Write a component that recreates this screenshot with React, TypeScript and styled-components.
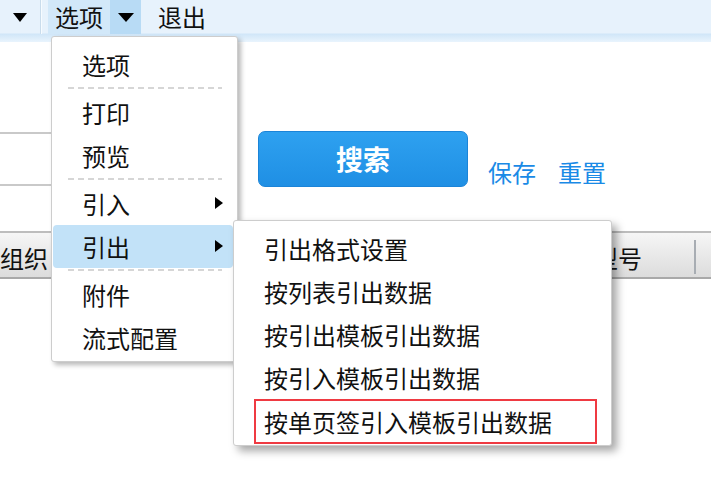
import styled, { createGlobalStyle } from "styled-components";

const GlobalStyle = createGlobalStyle`
  html, body {
    margin: 0;
    padding: 0;
    background: #fff;
    overflow: hidden;
  }
  body {
    font-family: "Noto Sans CJK SC", "Noto Sans", sans-serif;
    color: #111;
  }
`;

const Page = styled.div`
  position: relative;
  width: 711px;
  height: 484px;
  overflow: hidden;
`;

const TopBar = styled.div`
  display: flex;
  height: 42px;
  background: linear-gradient(
    to bottom,
    #e7f2fc 0,
    #e7f2fc 33px,
    #d0e6f8 34px,
    #e9f4fd 42px
  );
`;

const BarSlot = styled.div<{ $w?: number; $bg?: string; $pad?: number }>`
  display: flex;
  align-items: center;
  justify-content: ${(p) => (p.$pad !== undefined ? "flex-start" : "center")};
  height: 34px;
  width: ${(p) => (p.$w ? `${p.$w}px` : "auto")};
  padding-left: ${(p) => p.$pad ?? 0}px;
  box-sizing: border-box;
  background: ${(p) => p.$bg ?? "transparent"};
  font-size: 24px;
  line-height: 34px;
`;

const BarDivider = styled.div`
  width: 2px;
  height: 34px;
  margin: 0 6px 0 0;
  background: linear-gradient(to right, #c9dcec 0, #c9dcec 1px, #f6fbff 1px);
`;

const Caret = styled.span<{ $size?: number }>`
  display: inline-block;
  width: 0;
  height: 0;
  border-left: ${(p) => (p.$size ?? 16) / 2}px solid transparent;
  border-right: ${(p) => (p.$size ?? 16) / 2}px solid transparent;
  border-top: 9px solid #000;
`;

const Content = styled.div`
  padding-top: 89px;
`;

const FormRow = styled.div`
  display: flex;
  align-items: flex-end;
  height: 56px;
`;

const FieldBox = styled.div`
  align-self: flex-start;
  margin-top: 1px;
  width: 226px;
  height: 50px;
  border-top: 2px solid #c9c9c9;
  border-bottom: 2px solid #c9c9c9;
`;

const SearchButton = styled.button`
  margin-left: 32px;
  width: 210px;
  height: 56px;
  border: 1px solid #1b84d8;
  border-radius: 7px;
  background: linear-gradient(to bottom, #2ea1f0, #1f8fe4);
  color: #fff;
  font-family: inherit;
  font-size: 27px;
  font-weight: bold;
  line-height: 54px;
  padding: 0 0 2px;
  align-self: flex-start;
`;

const TextLink = styled.a<{ $gap: number }>`
  margin-left: ${(p) => p.$gap}px;
  margin-bottom: 1px;
  color: #1a8ae6;
  font-size: 24px;
  line-height: 28px;
  text-decoration: none;
`;

const HeaderRow = styled.div`
  display: flex;
  align-items: center;
  margin-top: 44px;
  height: 44px;
  border-top: 2px solid #bdbdbd;
  border-bottom: 2px solid #a9a9a9;
  background: linear-gradient(to bottom, #f6f6f6, #dcdcdc);
  font-size: 24px;
`;

const HeaderCell = styled.div<{ $w: number }>`
  width: ${(p) => p.$w}px;
  flex: none;
  padding-top: 4px;
`;

const HeaderSep = styled.div`
  width: 2px;
  height: 34px;
  margin-top: 4px;
  background: #a8adb3;
`;

const Menu = styled.div<{ $left: number; $top: number; $w: number }>`
  position: absolute;
  left: ${(p) => p.$left}px;
  top: ${(p) => p.$top}px;
  width: ${(p) => p.$w}px;
  box-sizing: border-box;
  background: #fff;
  border: 1px solid #cdcdcd;
  border-radius: 3px;
  box-shadow: 3px 3px 5px rgba(0, 0, 0, 0.28);
  z-index: 5;
`;

const MainMenu = styled(Menu)`
  padding: 6px 4px 2px 1px;
`;

const SubMenu = styled(Menu)`
  padding: 6px 14px 1px 20px;
  box-shadow: 5px 5px 8px rgba(0, 0, 0, 0.35);
  z-index: 6;
`;

const MenuItem = styled.div<{ $active?: boolean }>`
  position: relative;
  display: flex;
  align-items: center;
  height: 43px;
  padding-left: 29px;
  border-radius: 4px;
  background: ${(p) => (p.$active ? "#c2e2f8" : "transparent")};
  font-size: 24px;
  line-height: 43px;
`;

const SubItem = styled.div<{ $marked?: boolean }>`
  display: flex;
  align-items: center;
  height: ${(p) => (p.$marked ? 41 : 43)}px;
  margin-left: ${(p) => (p.$marked ? 0 : 2)}px;
  padding-left: 8px;
  border: ${(p) => (p.$marked ? "2px solid #ef3a42" : "none")};
  font-size: 24px;
  line-height: 43px;
`;

const MenuSep = styled.div`
  height: 5px;
  margin: 0 11px 0 15px;
  background: repeating-linear-gradient(
      to right,
      #d6d6d6 0,
      #d6d6d6 6px,
      transparent 6px,
      transparent 10px
    )
    0 1px / 100% 2px no-repeat;
`;

const SubArrow = styled.span`
  position: absolute;
  right: 10px;
  top: 15px;
  width: 0;
  height: 0;
  border-top: 6px solid transparent;
  border-bottom: 6px solid transparent;
  border-left: 8px solid #000;
`;

const mainItems: Array<string | null> = [
  "选项",
  null,
  "打印",
  "预览",
  null,
  "引入",
  "引出",
  null,
  "附件",
  "流式配置",
];

const exportItems = [
  "引出格式设置",
  "按列表引出数据",
  "按引出模板引出数据",
  "按引入模板引出数据",
  "按单页签引入模板引出数据",
];

export default function App() {
  return (
    <Page>
      <GlobalStyle />
      <TopBar>
        <BarSlot $w={40}>
          <Caret $size={15} />
        </BarSlot>
        <BarDivider />
        <BarSlot $w={62} $bg="#d2e8f9" $pad={7}>
          选项
        </BarSlot>
        <BarSlot $w={31} $bg="#b8dbf5">
          <Caret />
        </BarSlot>
        <BarSlot $pad={17}>退出</BarSlot>
      </TopBar>

      <Content>
        <FormRow>
          <FieldBox />
          <SearchButton>搜索</SearchButton>
          <TextLink $gap={20}>保存</TextLink>
          <TextLink $gap={22}>重置</TextLink>
        </FormRow>
        <HeaderRow>
          <HeaderCell $w={594}>组织</HeaderCell>
          <HeaderCell $w={100}>型号</HeaderCell>
          <HeaderSep />
        </HeaderRow>
      </Content>

      <MainMenu $left={51} $top={36} $w={187}>
        {mainItems.map((label, i) =>
          label === null ? (
            <MenuSep key={i} />
          ) : (
            <MenuItem key={i} $active={label === "引出"}>
              {label}
              {(label === "引入" || label === "引出") && <SubArrow />}
            </MenuItem>
          )
        )}
      </MainMenu>

      <SubMenu $left={233} $top={220} $w={379}>
        {exportItems.map((label, i) => (
          <SubItem key={label} $marked={i === exportItems.length - 1}>
            {label}
          </SubItem>
        ))}
      </SubMenu>
    </Page>
  );
}
